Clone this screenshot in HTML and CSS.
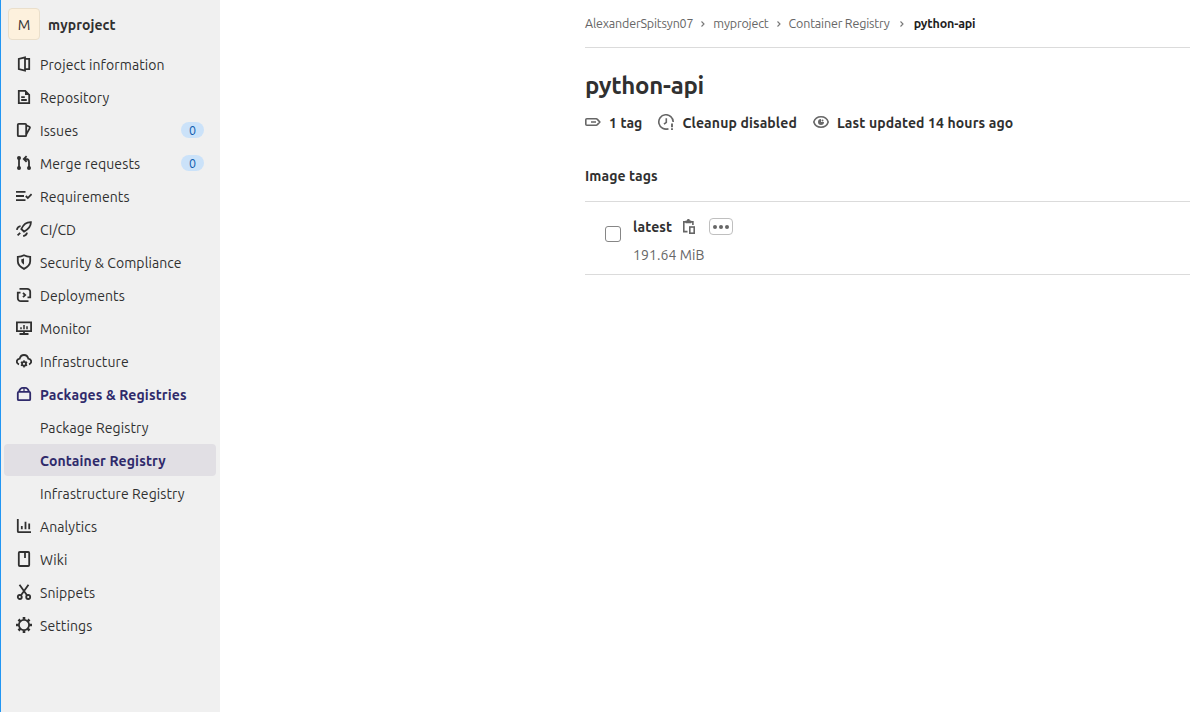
FILE: index.html
```html
<!DOCTYPE html>
<html lang="en">
<head>
<meta charset="utf-8">
<title>python-api · Container Registry</title>
<link rel="stylesheet" href="styles.css">
</head>
<body>
<div class="page">
  <aside class="sidebar">
    <a class="project"><span class="avatar">M</span><span class="project-name">myproject</span></a>
    <nav class="menu">
      <a class="item"><svg class="icon" viewBox="0 0 16 16"><path d="M9 1.4 2.8 2.9v10.2L9 14.6zM9 2.8h4.2v10.4H9"/></svg><span>Project information</span></a>
      <a class="item"><svg class="icon" viewBox="0 0 16 16"><path d="M2.8 1.8h6.4l4 4v8.4H2.8zM5.2 8.2h3.6M5.2 11h5.6"/><path class="fill" d="M9 1.2 13.8 6H9z"/></svg><span>Repository</span></a>
      <a class="item"><svg class="icon" viewBox="0 0 16 16"><rect x="1.8" y="1.8" width="8.4" height="12.4" rx="1"/><path d="M10.2 3.2l3.2 1.6c.5.3.7.8.4 1.3L10.4 12"/></svg><span>Issues</span><span class="badge">0</span></a>
      <a class="item"><svg class="icon" viewBox="0 0 16 16"><path d="M3 3v10M13 13V7c0-2-1.300-3-3-3H8.500M10.600 1.200 7.800 4l2.800 2.800"/><circle class="fill" cx="3" cy="3" r="2"/><circle class="fill" cx="3" cy="13" r="2"/><circle class="fill" cx="13" cy="13" r="2"/></svg><span>Merge requests</span><span class="badge">0</span></a>
      <a class="item"><svg class="icon" viewBox="0 0 16 16"><path d="M0 3.800h9.500M0 8h8M0 12.200h9.500M9.800 8l2 2 3.800-4"/></svg><span>Requirements</span></a>
      <a class="item"><svg class="icon" viewBox="0 0 16 16"><path d="M14.900 1.100c-4.200-.1-7.200 1.600-9.600 6.900L8 10.700c5-2.700 7-5.400 6.900-9.600zM4.600 5.200C2.600 5.400 1.400 6.500.8 8.900M11 11.600c-.3 2-1.400 3-3.800 3.600M4.200 11.800l-2.600 2.600"/></svg><span>CI/CD</span></a>
      <a class="item"><svg class="icon" viewBox="0 0 16 16"><path d="M8 1.200c2 1 4 1.500 6.200 1.600v4.400c0 3.300-2.500 5.700-6.200 7.700-3.700-2-6.200-4.400-6.200-7.700V2.800C4 2.700 6 2.200 8 1.200z"/><path class="fill" d="M8 4.200v6.600C6.300 9.600 5.300 8.400 5.300 6.800V5.200C6.300 5.100 7.200 4.800 8 4.200z"/></svg><span>Security &amp; Compliance</span></a>
      <a class="item"><svg class="icon" viewBox="0 0 16 16"><path d="M3.500 1.800h7.700a3 3 0 0 1 3 3v5.600h-2.700M4.500 5.600H1.800v5.600a3 3 0 0 0 3 3h7.700"/><path d="M7 5.800 9.200 8 7 10.200"/></svg><span>Deployments</span></a>
      <a class="item"><svg class="icon" viewBox="0 0 16 16"><path d="M.9 2.400h14.200v8.800H.9zM8 11v3M3.500 14h9"/><path class="teeth" d="M5 7.200v2M8 5v4.200M11 6.300v2.900"/></svg><span>Monitor</span></a>
      <a class="item"><svg class="icon" viewBox="0 0 16 16"><path d="M3 11.300C1.600 10.900.8 10 .8 8.600c0-1.700 1.200-2.800 2.900-3C4.300 3.200 5.900 2 8 2s3.700 1.200 4.300 3.600c1.700.2 2.900 1.300 2.900 3 0 1.400-.8 2.300-2.200 2.700"/><circle cx="8" cy="10.800" r="2"/><path class="teeth" d="M8 7.200v1.600M8 12.800v1.600M4.900 9l1.400.8M9.700 11.800l1.400.8M11.100 9l-1.400.8M6.300 11.800l-1.400.8"/></svg><span>Infrastructure</span></a>
      <a class="item current"><svg class="icon" viewBox="0 0 16 16"><rect x="1.800" y="5.900" width="12.400" height="8.300" rx="1"/><path d="M3 5.800C3.700 3.300 5 1.800 6.800 1.800h2.400c1.800 0 3.100 1.500 3.800 4"/><path class="thin" d="M8 2v4"/></svg><span>Packages &amp; Registries</span></a>
      <a class="item sub"><span>Package Registry</span></a>
      <a class="item sub current selected"><span>Container Registry</span></a>
      <a class="item sub"><span>Infrastructure Registry</span></a>
      <a class="item"><svg class="icon" viewBox="0 0 16 16"><path d="M1.800 1v12.200c0 .6.400 1 1 1H15M5.800 8v3.200M9.500 3.700v7.500M13.200 5.500v5.700"/></svg><span>Analytics</span></a>
      <a class="item"><svg class="icon" viewBox="0 0 16 16"><rect x="2.800" y="1" width="10.400" height="14" rx="1"/><path d="M9 1.500V7"/></svg><span>Wiki</span></a>
      <a class="item"><svg class="icon" viewBox="0 0 16 16"><circle cx="3.800" cy="13" r="2"/><circle cx="12.200" cy="13" r="2"/><path d="M3.500.8 11 11.300M12.500.8 5 11.300"/></svg><span>Snippets</span></a>
      <a class="item"><svg class="icon" viewBox="0 0 16 16"><circle cx="8" cy="8" r="5.100"/><path class="cog" d="M8 0v2.800M8 13.200V16M0 8h2.800M13.200 8H16M2.500 2.500l1.800 1.800M11.700 11.700l1.800 1.800M13.500 2.500l-1.800 1.800M4.300 11.700l-1.800 1.800"/></svg><span>Settings</span></a>
    </nav>
  </aside>
  <main class="content">
    <nav class="crumbs">
      <a>AlexanderSpitsyn07</a><svg class="sep" viewBox="0 0 8 8"><path d="M2.500 1.500 5 4 2.500 6.500"/></svg>
      <a>myproject</a><svg class="sep" viewBox="0 0 8 8"><path d="M2.500 1.500 5 4 2.500 6.500"/></svg>
      <a>Container Registry</a><svg class="sep wide" viewBox="0 0 8 8"><path d="M2.500 1.500 5 4 2.500 6.500"/></svg>
      <a class="here">python-api</a>
    </nav>
    <h1 class="title">python-api</h1>
    <div class="meta">
      <span class="fact"><svg class="icon" viewBox="0 0 16 16"><path d="M1.800 4.800h9.400c.5 0 .9.200 1.200.6L14.800 8l-2.400 2.600c-.3.400-.7.600-1.200.6H1.800c-.6 0-1-.4-1-1V5.800c0-.6.400-1 1-1zM6 8h5"/></svg><span>1 tag</span></span>
      <span class="fact"><svg class="icon" viewBox="0 0 16 16"><path d="M10.500 14.700A7.200 7.200 0 1 1 15.200 8M8.300 4.300v4L6 10.200"/><path class="mark" d="M14 9.600v3.600M14 14.200V16"/></svg><span>Cleanup disabled</span></span>
      <span class="fact"><svg class="icon" viewBox="0 0 16 16"><path d="M8 2.800c3.700 0 6.300 2.300 7.200 5.200-.9 2.900-3.500 5.200-7.200 5.200S1.700 10.900.8 8C1.700 5.100 4.300 2.800 8 2.800z"/><path class="fill" d="M8 5a3 3 0 1 0 3 3H8z"/><circle class="fill" cx="9.500" cy="6.400" r="1"/></svg><span>Last updated 14 hours ago</span></span>
    </div>
    <h2 class="subtitle">Image tags</h2>
    <section class="row">
      <span class="check"></span>
      <div class="tag">
        <div class="tag-head"><span class="tag-name">latest</span><svg class="icon" viewBox="0 0 16 16"><path d="M6.500 12.600H2.800V2.900h9.100V6"/><path class="fill" d="M4.600 1.500h1.300L6.500 0h1.800l.600 1.500h1.300v2.700H4.600z"/><rect x="8.800" y="8" width="4.400" height="6.200"/></svg><span class="more"><i></i><i></i><i></i></span></div>
        <div class="size">191.64 MiB</div>
      </div>
    </section>
  </main>
</div>
</body>
</html>
```

FILE: styles.css
```css
* { box-sizing: border-box; }
body { margin: 0; background: #fff; color: #303030; font-family: Ubuntu, "Noto Sans", sans-serif; font-size: 14px; letter-spacing: .1px; }
.page { display: flex; height: 712px; overflow: hidden; }
.sidebar { width: 220px; flex: none; background: #f0f0f0; border-left: 1px solid #2196f3; padding: 8px 4px 0 3px; }
.project { display: flex; align-items: center; gap: 8px; height: 32px; padding-left: 4px; margin-bottom: 8px; }
.avatar { width: 32px; height: 32px; padding-top: 1px; border: 1px solid #eadfcb; border-radius: 4px; background: #fdf1dd; display: flex; align-items: center; justify-content: center; font-size: 14.500px; }
.project-name { font-weight: 700; padding-top: 2px; }
.menu { display: flex; flex-direction: column; gap: 1px; }
.item { display: flex; align-items: center; gap: 8px; height: 32px; padding: 0 12px; border-radius: 4px; line-height: 20px; white-space: nowrap; }
.item > span { position: relative; top: 1px; }
.item.sub { padding-left: 36px; }
.current { color: #2f2a6b; font-weight: 700; letter-spacing: .14px; }
.selected { background: #e1dfe4; }
.icon { width: 16px; height: 16px; flex: none; fill: none; stroke: currentColor; stroke-width: 1.8; }
.icon .fill { fill: currentColor; stroke: none; }
.icon .thin { stroke-width: 1.200; }
.icon .teeth { stroke-width: 1.500; }
.icon .mark { stroke-width: 1.900; }
.icon .cog { stroke-width: 2.600; }
.item > .badge { top: 0; margin-left: auto; width: 23px; height: 16px; border-radius: 8px; background: #cbe2f9; color: #0b5cad; font-size: 12.5px; line-height: 17px; text-align: center; }
.content { flex: 1; margin-left: 365px; min-width: 0; }
.crumbs { display: flex; align-items: center; height: 48px; padding-bottom: 1px; border-bottom: 1px solid #dbdbdb; font-size: 12.5px; color: #666; letter-spacing: -.18px; white-space: nowrap; }
.sep { width: 8px; height: 8px; margin: 1px 6px 0; fill: none; stroke: #777; stroke-width: 1.100; flex: none; }
.sep.wide { margin: 1px 8px 0; }
.here { font-weight: 700; color: #1f1f1f; }
.title { margin: 22px 0 0; font-size: 24px; line-height: 32px; font-weight: 700; letter-spacing: -.3px; }
.meta { display: flex; gap: 16px; margin-top: 10px; height: 20px; font-weight: 700; line-height: 20px; letter-spacing: .12px; }
.fact { display: flex; align-items: center; gap: 8px; }
.fact > span { position: relative; top: 1px; }
.fact .icon, .tag .icon { color: #666; stroke-width: 1.600; }
.subtitle { margin: 34px 0 0; font-size: 14px; line-height: 20px; font-weight: 700; height: 35px; }
.row { display: flex; border-top: 1px solid #dbdbdb; border-bottom: 1px solid #dbdbdb; height: 74px; padding: 15px 0 0 20px; gap: 12px; }
.check { width: 16px; height: 16px; margin-top: 9px; border: 1px solid #868686; border-radius: 3px; }
.tag-head { display: flex; align-items: center; height: 20px; }
.tag-name { font-weight: 700; margin-right: 9px; }
.tag .icon { margin-bottom: 1px; }
.more { width: 24px; height: 17px; margin: 0 0 1px 12px; border: 1px solid #bfbfbf; border-radius: 4px; display: flex; align-items: center; justify-content: center; gap: 2px; }
.more i { width: 4px; height: 4px; border-radius: 50%; background: #666; }
.size { margin-top: 8px; line-height: 20px; color: #666; }
```
